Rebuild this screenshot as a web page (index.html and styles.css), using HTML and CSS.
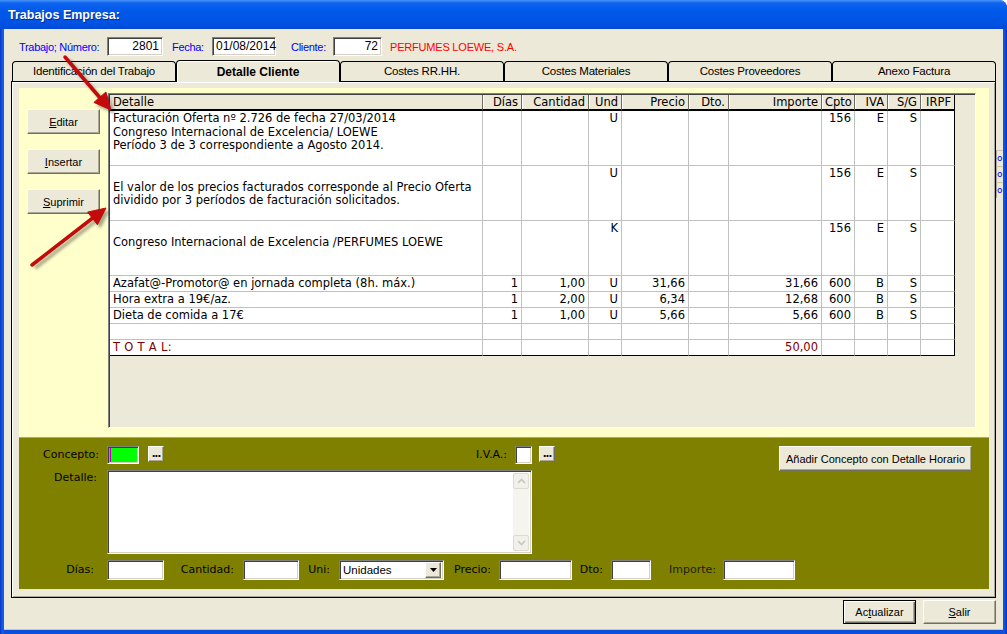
FILE: index.html
```html
<!DOCTYPE html>
<html lang="es">
<head>
    <meta charset="UTF-8" />
    <title>Trabajos Empresa</title>
    <link rel="stylesheet" href="styles.css">
</head>
<body>
<div class="window">
    <div class="titlebar">Trabajos Empresa:</div>
    <div class="client">
        <div class="top-row">
            <span class="lbl lbl-num">Trabajo; Número:</span>
            <span class="field right w-num">2801</span>
            <span class="lbl lbl-fecha">Fecha:</span>
            <span class="field w-fecha">01/08/2014</span>
            <span class="lbl lbl-cliente">Cliente:</span>
            <span class="field right w-cliente">72</span>
            <span class="company">PERFUMES LOEWE, S.A.</span>
        </div>

        <div class="tabs">
            <div class="tab">Identificación del Trabajo</div>
            <div class="tab active">Detalle Cliente</div>
            <div class="tab">Costes RR.HH.</div>
            <div class="tab">Costes Materiales</div>
            <div class="tab">Costes Proveedores</div>
            <div class="tab">Anexo Factura</div>
        </div>

        <div class="page-wrap">
            <div class="page">
                <div class="detail-area">
                    <div class="side-buttons">
                        <div class="btn side-btn"><u>E</u>ditar</div>
                        <div class="btn side-btn"><u>I</u>nsertar</div>
                        <div class="btn side-btn"><u>S</u>uprimir</div>
                    </div>
                    <div class="grid-box">
                        <div class="grid-head">
                            <span class="t">Detalle</span><span>Días</span><span>Cantidad</span><span>Und</span><span>Precio</span><span>Dto.</span><span>Importe</span><span>Cpto</span><span>IVA</span><span>S/G</span><span>IRPF</span>
                        </div>
                        <div class="row tall">
                            <span class="t">Facturación Oferta nº 2.726 de fecha 27/03/2014<br>Congreso Internacional de Excelencia/ LOEWE<br>Período 3 de 3 correspondiente a Agosto 2014.</span><span></span><span></span><span>U</span><span></span><span></span><span></span><span>156</span><span>E</span><span>S</span><span></span>
                        </div>
                        <div class="row tall">
                            <span class="t"><br>El valor de los precios facturados corresponde al Precio Oferta<br>dividido por 3 períodos de facturación solicitados.</span><span></span><span></span><span>U</span><span></span><span></span><span></span><span>156</span><span>E</span><span>S</span><span></span>
                        </div>
                        <div class="row tall">
                            <span class="t"><br>Congreso Internacional de Excelencia /PERFUMES LOEWE</span><span></span><span></span><span>K</span><span></span><span></span><span></span><span>156</span><span>E</span><span>S</span><span></span>
                        </div>
                        <div class="row">
                            <span class="t">Azafat@-Promotor@ en jornada completa (8h. máx.)</span><span>1</span><span>1,00</span><span>U</span><span>31,66</span><span></span><span>31,66</span><span>600</span><span>B</span><span>S</span><span></span>
                        </div>
                        <div class="row">
                            <span class="t">Hora extra a 19€/az.</span><span>1</span><span>2,00</span><span>U</span><span>6,34</span><span></span><span>12,68</span><span>600</span><span>B</span><span>S</span><span></span>
                        </div>
                        <div class="row">
                            <span class="t">Dieta de comida a 17€</span><span>1</span><span>1,00</span><span>U</span><span>5,66</span><span></span><span>5,66</span><span>600</span><span>B</span><span>S</span><span></span>
                        </div>
                        <div class="row">
                            <span class="t"></span><span></span><span></span><span></span><span></span><span></span><span></span><span></span><span></span><span></span><span></span>
                        </div>
                        <div class="row total">
                            <span class="t total-lbl">T O T A L:</span><span></span><span></span><span></span><span></span><span></span><span class="total-val">50,00</span><span></span><span></span><span></span><span></span>
                        </div>
                    </div>
                </div>

                <div class="edit-area">
                    <div class="edit-row first">
                        <span class="elbl" style="width: 88px">Concepto:</span>
                        <span class="box green w-concepto"></span>
                        <div class="btn dots">...</div>
                        <span class="elbl" style="width: 351px">I.V.A.:</span>
                        <span class="box w-iva"></span>
                        <div class="btn dots dots-iva">...</div>
                        <div class="btn add-btn">Añadir Concepto con Detalle Horario</div>
                    </div>
                    <div class="edit-row">
                        <span class="elbl detalle-lbl" style="width: 88px">Detalle:</span>
                        <div class="box memo">
                            <div class="scrollbar">
                                <div class="sb-btn">
                                    <svg width="9" height="6" viewBox="0 0 9 6"><path d="M1 5 L4.5 1.5 L8 5" fill="none" stroke="#c9c7ba" stroke-width="1.6"/></svg>
                                </div>
                                <div class="sb-track"></div>
                                <div class="sb-btn">
                                    <svg width="9" height="6" viewBox="0 0 9 6"><path d="M1 1 L4.5 4.5 L8 1" fill="none" stroke="#c9c7ba" stroke-width="1.6"/></svg>
                                </div>
                            </div>
                        </div>
                    </div>
                    <div class="edit-row last">
                        <span class="elbl" style="width: 88px; padding-right: 13px">Días:</span>
                        <span class="box" style="width: 57px"></span>
                        <span class="elbl" style="width: 79px; padding-right: 9px">Cantidad:</span>
                        <span class="box" style="width: 56px"></span>
                        <span class="elbl" style="width: 40px; padding-right: 9px">Uni:</span>
                        <div class="box combo">
                            <span class="combo-text">Unidades</span>
                            <span class="combo-btn">
                                <svg width="7" height="4" viewBox="0 0 7 4"><path d="M0 0 H7 L3.5 4 Z" fill="#000"/></svg>
                            </span>
                        </div>
                        <span class="elbl" style="width: 55px">Precio:</span>
                        <span class="box" style="width: 73px"></span>
                        <span class="elbl" style="width: 39px">Dto:</span>
                        <span class="box" style="width: 40px"></span>
                        <span class="elbl dim" style="width: 72px; padding-right: 7px">Importe:</span>
                        <span class="box" style="width: 72px"></span>
                    </div>
                </div>
            </div>
            <div class="strip">
                <span>o</span><span>o</span><span>o</span>
            </div>
        </div>

        <div class="footer">
            <div class="btn foot-btn default">Ac<u>t</u>ualizar</div>
            <div class="btn foot-btn"><u>S</u>alir</div>
        </div>
    </div>

    <!-- flechas rojas de la captura -->
    <svg class="arrows" width="1007" height="634" viewBox="0 0 1007 634">
        <defs>
            <filter id="sh" x="-20%" y="-20%" width="140%" height="140%">
                <feGaussianBlur stdDeviation="1.6"/>
            </filter>
        </defs>
        <g transform="translate(3,3)" fill="#000" stroke="#000" opacity="0.35" filter="url(#sh)">
            <line x1="65" y1="57" x2="101" y2="99" stroke-width="3.5"/>
            <polygon points="111,110 93.9,102.4 105.9,92"/>
            <line x1="32" y1="265" x2="94" y2="217" stroke-width="3.5"/>
            <polygon points="106,208 97.4,224.7 87.6,212.1"/>
        </g>
        <g fill="#c30b0b" stroke="#c30b0b">
            <line x1="65" y1="57" x2="101" y2="99" stroke-width="3.5" stroke-linecap="round"/>
            <polygon points="111,110 93.9,102.4 105.9,92" stroke-width="1" stroke-linejoin="round"/>
            <line x1="32" y1="265" x2="94" y2="217" stroke-width="3.5" stroke-linecap="round"/>
            <polygon points="106,208 97.4,224.7 87.6,212.1" stroke-width="1" stroke-linejoin="round"/>
        </g>
    </svg>
</div>
</body>
</html>
```

FILE: styles.css
```css
* {
    margin: 0;
    padding: 0;
    box-sizing: border-box;
}
body {
    width: 1007px;
    height: 634px;
    overflow: hidden;
    background: #fff;
    font-family: "Liberation Sans", Arial, sans-serif;
}
.window {
    position: relative;
    width: 1007px;
    height: 634px;
    background: linear-gradient(to right, #0735c4, #1a64ee 3px, #0b4fdc 4px, #0b4fdc 1003px, #1358e4 1004px, #0633c0);
    border-radius: 0 8px 0 0;
}
.titlebar {
    height: 29px;
    padding-left: 8px;
    color: #fff;
    font: bold 12.5px "Liberation Sans", Arial, sans-serif;
    line-height: 31px;
    text-shadow: 1px 1px #0a2a8a;
    background: linear-gradient(#4a96fb 0, #0d64ef 3px, #0058ea 12px, #0054e4 22px, #0349d6 29px);
    border-radius: 0 8px 0 0;
}
.client {
    margin: 0 4px;
    height: 601px;
    background: #ece9d8;
    border-bottom: 1px solid #c8c4b0;
}

/* fila superior */
.top-row {
    display: flex;
    align-items: center;
    height: 27px;
    padding: 8px 0 0 15px;
    font-size: 11px;
}
.lbl {
    color: #0000ff;
    letter-spacing: -0.3px;
}
.lbl-num {
    width: 88px;
}
.lbl-fecha {
    width: 40px;
    margin-left: 9px;
}
.lbl-cliente {
    width: 42px;
    margin-left: 15px;
}
.company {
    margin-left: 8px;
    color: #ff0000;
    letter-spacing: -0.2px;
}
.field {
    height: 19px;
    padding: 0 3px;
    line-height: 16px;
    font-size: 12px;
    color: #000;
    background: #fff;
    border: 1px solid;
    border-color: #808080 #fff #fff #808080;
    box-shadow: inset 1px 1px #404040, inset -1px -1px #d4d0c8;
}
.right {
    text-align: right;
}
.w-num {
    width: 56px;
}
.w-fecha {
    width: 64px;
}
.w-cliente {
    width: 49px;
}

/* pestañas */
.tabs {
    display: flex;
    align-items: flex-end;
    height: 21px;
    margin: 4px 0 0 8px;
}
.tab {
    width: 164px;
    height: 20px;
    border: 1px solid #000;
    border-bottom: none;
    border-radius: 4px 4px 0 0;
    background: #ece9d8;
    text-align: center;
    line-height: 19px;
    font-size: 11.5px;
    letter-spacing: -0.2px;
    color: #000;
}
.tab.active {
    position: relative;
    z-index: 1;
    height: 22px;
    margin-bottom: -1px;
    font: bold 12px "Liberation Sans", Arial, sans-serif;
    letter-spacing: 0;
    line-height: 22px;
    box-shadow: inset 1px 1px #fff;
}

.page-wrap {
    display: flex;
    align-items: flex-start;
    margin-left: 7px;
}
.page {
    width: 985px;
    height: 517px;
    padding: 6px 6px 8px 7px;
    border: 1px solid #000;
    box-shadow: inset 1px 1px #fff, inset -1px -1px #aca899;
}
.strip {
    display: flex;
    flex-direction: column;
    width: 7px;
    margin-top: 69px;
}
.strip span {
    height: 16px;
    border-top: 1px solid #c9c5b2;
    border-left: 1px solid #aca899;
    font: 9px "DejaVu Sans", sans-serif;
    line-height: 14px;
    color: #0000ff;
}

/* zona amarilla */
.detail-area {
    display: flex;
    align-items: flex-start;
    height: 349px;
    padding: 5px 0 0 8px;
    background: #ffffcc;
}
.side-buttons {
    display: flex;
    flex-direction: column;
    gap: 15px;
    margin-top: 16px;
}
.btn {
    display: flex;
    align-items: center;
    justify-content: center;
    background: #ece9d8;
    border: 1px solid;
    border-color: #fff #716f64 #716f64 #fff;
    box-shadow: inset -1px -1px #aca899;
    font-family: "Liberation Sans", Arial, sans-serif;
    font-size: 11px;
    color: #000;
}
.side-btn {
    width: 73px;
    height: 25px;
}
.grid-box {
    width: 868px;
    height: 335px;
    margin-left: 8px;
    padding: 1px 0 0 1px;
    background: #ece9d8;
    border: 1px solid;
    border-color: #808080 #fff #fff #808080;
    box-shadow: inset 1px 1px #404040;
    font: 11.5px "DejaVu Sans", sans-serif;
    color: #000;
}
.grid-head, .row {
    display: grid;
    grid-template-columns: 373px 39px 67px 33px 67px 40px 93px 33px 33px 33px 34px;
    width: 845px;
}
.grid-head span {
    height: 16px;
    padding: 1px 3px 0;
    line-height: 13px;
    text-align: right;
    border-right: 1px solid #6d6b60;
    border-bottom: 2px solid #000;
    box-shadow: inset 1px 0 #fff;
}
.grid-head span:last-child {
    border-right-color: #000;
}
.row {
    height: 16px;
    background: #fff;
}
.row.tall {
    height: 55px;
}
.row span {
    padding: 0 3px;
    line-height: 15px;
    text-align: right;
    white-space: nowrap;
    overflow: hidden;
    border-right: 1px solid #c0c0c0;
    border-bottom: 1px solid #c0c0c0;
}
.row.tall span {
    padding-top: 1px;
    line-height: 13.5px;
}
.row span:last-child {
    border-right-color: #000;
}
.row span.t, .grid-head span.t {
    text-align: left;
}
.row.total span {
    border-bottom-color: #000;
}
.total-lbl, .total-val {
    color: #800000;
}
.total-lbl {
    letter-spacing: 0.3px;
}

/* zona verde oliva */
.edit-area {
    height: 152px;
    padding: 8px 0 0 0;
    background: #808000;
    border-top: 1px solid #a9a68a;
    font: 11px "DejaVu Sans", sans-serif;
    color: #000;
}
.edit-row {
    display: flex;
    align-items: flex-start;
}
.edit-row.first {
    height: 24px;
}
.edit-row.last {
    align-items: center;
    margin-top: 6px;
}
.elbl {
    padding-right: 8px;
    text-align: right;
    line-height: 18px;
}
.edit-row.last .elbl {
    line-height: 20px;
}
.elbl.dim {
    color: #1e1e0c;
}
.detalle-lbl {
    padding-right: 10px;
    line-height: 16px;
}
.box {
    display: block;
    height: 18px;
    background: #fff;
    border: 1px solid;
    border-color: #808080 #fff #fff #808080;
    box-shadow: inset 1px 1px #404040, inset -1px -1px #d4d0c8;
}
.edit-row.last .box {
    height: 20px;
}
.green {
    background: linear-gradient(to right, #00ff00 2px, #c000c0 2px, #c000c0 3px, #00ff00 3px);
}
.w-concepto {
    width: 32px;
}
.w-iva {
    width: 17px;
}
.btn.dots {
    width: 16px;
    height: 16px;
    margin-left: 9px;
    font: bold 10px "DejaVu Sans", sans-serif;
    line-height: 8px;
    letter-spacing: -1px;
}
.btn.dots-iva {
    margin-left: 7px;
}
.add-btn {
    width: 193px;
    height: 25px;
    margin-left: 224px;
    white-space: nowrap;
}
.memo {
    display: flex;
    justify-content: flex-end;
    width: 425px;
    height: 84px;
    padding: 2px 2px 2px 0;
}
.scrollbar {
    display: flex;
    flex-direction: column;
    width: 16px;
    background: #f5f4ee;
}
.sb-btn {
    display: flex;
    align-items: center;
    justify-content: center;
    height: 16px;
    background: #f1f0ea;
    border: 1px solid #dedcd2;
    border-radius: 2px;
}
.sb-track {
    flex: 1;
}
.combo {
    display: flex;
    align-items: center;
    justify-content: space-between;
    width: 105px;
    padding: 0 2px 0 3px;
    font-family: "Liberation Sans", Arial, sans-serif;
    font-size: 11.5px;
}
.combo-btn {
    display: flex;
    align-items: center;
    justify-content: center;
    width: 16px;
    height: 16px;
    background: #ece9d8;
    border: 1px solid;
    border-color: #fff #716f64 #716f64 #fff;
    box-shadow: inset -1px -1px #aca899;
}

/* botones inferiores */
.footer {
    display: flex;
    justify-content: flex-end;
    gap: 7px;
    margin-top: 2px;
    padding-right: 7px;
}
.foot-btn {
    width: 73px;
    height: 24px;
}
.foot-btn.default {
    border: 1px solid #000;
    box-shadow: inset 1px 1px #fff, inset -1px -1px #716f64, inset -2px -2px #aca899;
}

.arrows {
    position: absolute;
    top: 0;
    left: 0;
    pointer-events: none;
}
```
